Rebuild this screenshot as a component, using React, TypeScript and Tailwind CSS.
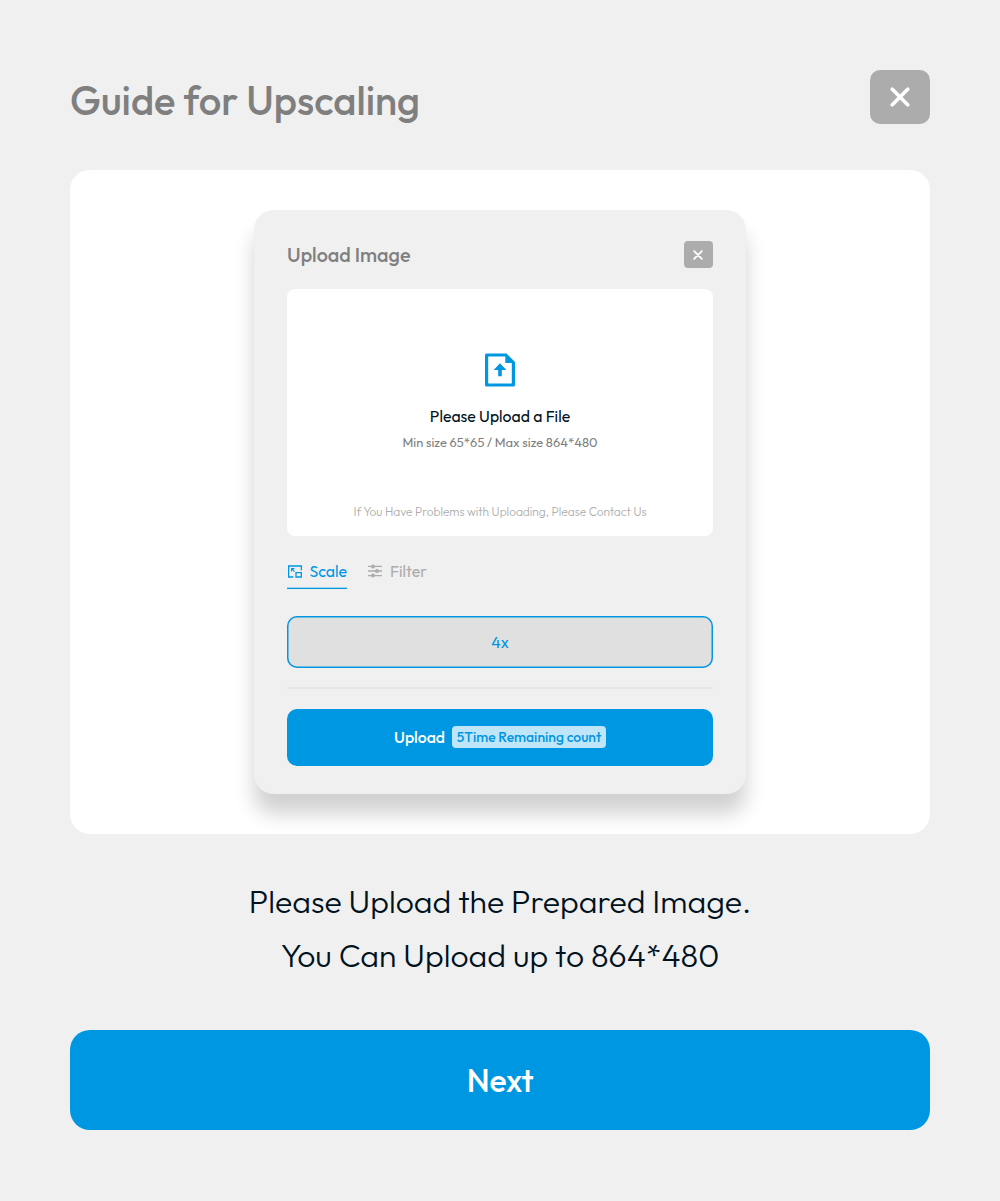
function CloseIcon({ className }: { className: string }) {
  return (
    <svg className={className} viewBox="0 0 20 20" fill="none" stroke="currentColor" strokeWidth="3.7" strokeLinecap="round">
      <path d="M2.3 2.3 17.7 17.7M17.7 2.3 2.3 17.7" />
    </svg>
  );
}

function FileUploadIcon() {
  return (
    <svg className="h-[34px] w-[30px]" viewBox="0 0 30 34" fill="#0097e2">
      <path
        fillRule="evenodd"
        d="M1.6 .5H21.5L30 9V32Q30 33.5 28.4 33.5H1.6Q0 33.5 0 32V2Q0 .5 1.6 .5ZM3.2 3.6V30.4H26.8V10H20.3V3.6Z"
      />
      <path d="M15 10.2 21.3 16.9H16.8V23.2H13.2V16.9H8.7Z" />
    </svg>
  );
}

function ScaleIcon() {
  return (
    <svg className="h-[13px] w-[14px]" viewBox="0 0 14 13" fill="none" stroke="currentColor" strokeWidth="1.3">
      <path d="M13.35 5.2V1H.65V12H5.4" />
      <path d="M8 7.6H13.3V12H8Z" />
      <path d="M3.6 6.4V3.6H6.4M3.8 3.8 6.6 6.6" strokeWidth="1.1" />
    </svg>
  );
}

function FilterIcon() {
  return (
    <svg className="h-[14px] w-[14px]" viewBox="0 0 14 14" fill="currentColor" stroke="currentColor" strokeWidth="1.4">
      <path d="M0 2.4H14M0 7H14M0 11.6H14" />
      <g stroke="none">
        <circle cx="5" cy="2.4" r="2" />
        <circle cx="9" cy="7" r="2" />
        <circle cx="5" cy="11.6" r="2" />
      </g>
    </svg>
  );
}

function UploadDialog() {
  return (
    <div className="flex h-[584px] w-[492px] flex-col rounded-[20px] bg-[#f0f0f0] px-[33px] pt-[31px] shadow-[0_20px_20px_rgba(0,0,0,0.18)]">
      <div className="flex h-[27px] items-center justify-between">
        <h2 className="pb-px text-[19.8px] leading-[25px] font-[460] text-[#7f7f7f]">Upload Image</h2>
        <button className="flex h-[27px] w-[29.5px] items-center justify-center rounded-[4px] bg-[#acacac] text-white">
          <CloseIcon className="size-[10px]" />
        </button>
      </div>

      <div className="mt-[21px] flex h-[247px] w-[426px] flex-col items-center rounded-[8px] bg-white pt-[64px]">
        <FileUploadIcon />
        <p className="mt-[19px] text-[15.8px] leading-[20px] font-[370] text-[#00121d]">Please Upload a File</p>
        <p className="mt-[8px] text-[12.9px] leading-[16px] font-[370] text-[#7f7f7f]">
          Min size 65*65 / Max size 864*480
        </p>
        <p className="mt-[54px] text-[11.9px] leading-[15px] font-[300] text-[#acacac]">
          If You Have Problems with Uploading, Please Contact Us
        </p>
      </div>

      <div className="mt-[25px] flex h-[28px] gap-[20px] text-[15.85px] leading-[20px] font-[370]">
        <div className="flex h-[28px] items-start bg-[linear-gradient(to_top,#0097e2_1px,#a6d5ec_1px,#a6d5ec_2px,transparent_2px)] text-[#0097e2]">
          <span className="flex h-[20px] items-center pr-[7.5px] pl-px">
            <ScaleIcon />
          </span>
          Scale
        </div>
        <div className="flex items-start text-[#acacac]">
          <span className="flex h-[20px] items-center pr-[8px] pl-px">
            <FilterIcon />
          </span>
          Filter
        </div>
      </div>

      <button className="mt-[26.5px] flex h-[52px] w-[426px] items-center justify-center rounded-[10px] bg-[#e0e0e0] pb-px text-[15.8px] leading-[20px] font-[370] text-[#0097e2] shadow-[inset_0_0_0_1.5px_#0097e2]">
        <span className="pt-px">4x</span>
      </button>
      <div className="mt-[19.5px] h-[2px] w-[426px] bg-[#e6e6e6]" />
      <button className="mt-[19.5px] flex h-[57px] w-[426px] items-center justify-center gap-[7px] rounded-[10px] bg-[#0097e2] text-white">
        <span className="text-[15.8px] leading-[20px] font-[460]">Upload</span>
        <span className="flex h-[21.5px] w-[154px] items-center justify-center rounded-[4px] bg-[#bfe5f8] text-[13.9px] leading-[20px] font-[480] text-[#0097e2]">
          5Time Remaining count
        </span>
      </button>
    </div>
  );
}

export default function App() {
  return (
    <main className="flex h-[1201px] w-[1000px] flex-col bg-[#f0f0f0] px-[70px] pt-[70px] font-['Outfit','Lato',sans-serif] antialiased">
      <header className="flex h-[60px] items-start justify-between">
        <h1 className="pt-[5px] text-[40px] leading-[50px] font-[480] text-[#7f7f7f]">Guide for Upscaling</h1>
        <button className="flex h-[54px] w-[60px] items-center justify-center rounded-[10px] bg-[#acacac] text-white">
          <CloseIcon className="size-[20px]" />
        </button>
      </header>

      <section className="mt-[40px] flex h-[664px] justify-center overflow-hidden rounded-[20px] bg-white pt-[40px]">
        <UploadDialog />
      </section>

      <p className="mt-[40px] text-center text-[32px] leading-[54px] font-[260] text-[#00121d]">
        Please Upload the Prepared Image.
        <br />
        You Can Upload up to 864*480
      </p>

      <button className="mt-[48px] h-[100px] rounded-[20px] bg-[#0097e2] text-[32px] font-[460] tracking-[-0.2px] text-white">Next</button>
    </main>
  );
}
